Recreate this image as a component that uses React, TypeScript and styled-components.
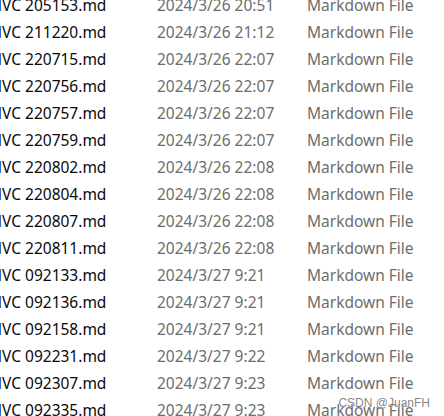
import styled, { createGlobalStyle } from "styled-components";

const GlobalStyle = createGlobalStyle`
  html, body {
    margin: 0;
    padding: 0;
    background: #fff;
    overflow: hidden;
  }
`;

const Page = styled.div`
  position: relative;
  width: 444px;
  height: 416px;
  overflow: hidden;
  background: #fff;
  font-family: "Noto Sans", "Open Sans", sans-serif;
`;

const List = styled.div`
  display: flex;
  flex-direction: column;
  margin-top: -9px;
`;

const Row = styled.div`
  display: grid;
  grid-template-columns: 157px 150px 1fr;
  height: 27px;
  align-items: center;
  font-size: 15.5px;
  white-space: nowrap;
`;

const Cell = styled.div<{ $muted?: boolean }>`
  color: ${p => (p.$muted ? "#6d6d6d" : "#0a0a0a")};
  overflow: visible;
`;

const Name = styled(Cell)`
  margin-left: -12px;
`;

const Watermark = styled.div`
  position: absolute;
  right: 14px;
  bottom: 6px;
  font-family: "Liberation Sans", Arial, sans-serif;
  font-size: 12px;
  color: rgba(110, 110, 110, 0.85);
  text-shadow: 0 0 1px #fff;
`;

type FileRow = {
  name: string;
  modified: string;
};

const files: FileRow[] = [
  { name: "MVC 205153.md", modified: "2024/3/26 20:51" },
  { name: "MVC 211220.md", modified: "2024/3/26 21:12" },
  { name: "MVC 220715.md", modified: "2024/3/26 22:07" },
  { name: "MVC 220756.md", modified: "2024/3/26 22:07" },
  { name: "MVC 220757.md", modified: "2024/3/26 22:07" },
  { name: "MVC 220759.md", modified: "2024/3/26 22:07" },
  { name: "MVC 220802.md", modified: "2024/3/26 22:08" },
  { name: "MVC 220804.md", modified: "2024/3/26 22:08" },
  { name: "MVC 220807.md", modified: "2024/3/26 22:08" },
  { name: "MVC 220811.md", modified: "2024/3/26 22:08" },
  { name: "MVC 092133.md", modified: "2024/3/27 9:21" },
  { name: "MVC 092136.md", modified: "2024/3/27 9:21" },
  { name: "MVC 092158.md", modified: "2024/3/27 9:21" },
  { name: "MVC 092231.md", modified: "2024/3/27 9:22" },
  { name: "MVC 092307.md", modified: "2024/3/27 9:23" },
  { name: "MVC 092335.md", modified: "2024/3/27 9:23" },
];

export default function App() {
  return (
    <Page>
      <GlobalStyle />
      <List>
        {files.map(file => (
          <Row key={file.name}>
            <Name>{file.name}</Name>
            <Cell $muted>{file.modified}</Cell>
            <Cell $muted>Markdown File</Cell>
          </Row>
        ))}
      </List>
      <Watermark>CSDN @JuanFH</Watermark>
    </Page>
  );
}
